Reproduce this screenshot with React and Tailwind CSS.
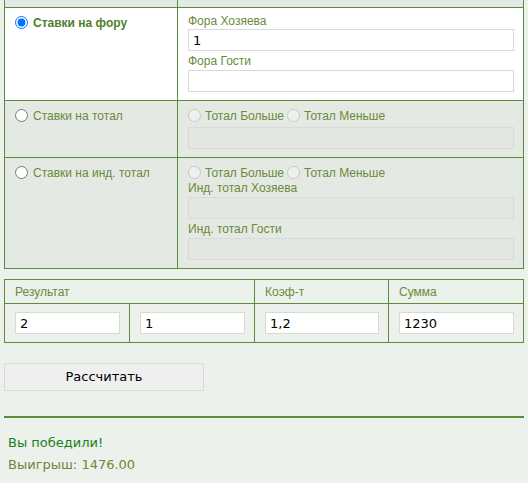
import React from "react";

const font = { fontFamily: '"DejaVu Sans", Verdana, sans-serif' };
const labelFont = { fontFamily: '"Liberation Sans", Tahoma, Arial, sans-serif' };

function Field({ value = "", disabled = false }) {
  return (
    <input
      type="text"
      defaultValue={value}
      disabled={disabled}
      className={
        "block w-full h-[22px] border border-[#d9d9d9] px-[4px] text-[13px] text-black outline-none " +
        (disabled ? "bg-[#e3e7e2]" : "bg-white")
      }
      style={font}
    />
  );
}

function Radio({ checked = false, disabled = false, name }) {
  return (
    <input
      type="radio"
      name={name}
      defaultChecked={checked}
      disabled={disabled}
      className="m-0 w-[13px] h-[13px] shrink-0"
    />
  );
}

function Label({ children, className = "" }) {
  return (
    <div className={"text-[12px] leading-[16px] text-[#6b8a3a] " + className} style={labelFont}>
      {children}
    </div>
  );
}

function BetCell({ title, checked, bold }) {
  return (
    <div className="border-r border-[#5b8c3b] pl-[10px] pt-[5px]">
      <label className="flex items-center gap-[5px]" style={labelFont}>
        <Radio name="bet" checked={checked} />
        <span
          className={
            "pt-[2px] text-[12px] leading-[16px] " +
            (bold ? "font-bold text-[#4f7f2d]" : "text-[#6b8a3a]")
          }
        >
          {title}
        </span>
      </label>
    </div>
  );
}

function TotalRadios({ name }) {
  return (
    <div className="flex items-center h-[16px] text-[12px] text-[#6b8a3a]" style={labelFont}>
      <Radio name={name} disabled />
      <span className="ml-[4px] pt-[1px]">Тотал Больше</span>
      <span className="ml-[3px] flex"><Radio name={name} disabled /></span>
      <span className="ml-[4px] pt-[1px]">Тотал Меньше</span>
    </div>
  );
}

export default function App() {
  return (
    <div className="min-h-[483px] bg-[#edf1ec] pl-[4px] pr-[4px]" style={font}>
      {/* bet types */}
      <div className="w-[520px] border-x border-b border-[#5b8c3b] bg-[#e5e9e4]">
        <div className="grid grid-cols-[173px_1fr] h-[8px] border-b border-[#5b8c3b]">
          <div className="border-r border-[#5b8c3b]" />
          <div />
        </div>

        <div className="grid grid-cols-[173px_1fr] h-[93px] border-b border-[#5b8c3b] bg-white">
          <BetCell title="Ставки на фору" checked bold />
          <div className="pl-[10px] pr-[9px] pt-[5px]">
            <Label>Фора Хозяева</Label>
            <Field value="1" />
            <Label className="mt-[2px] mb-[1px]">Фора Гости</Label>
            <Field />
          </div>
        </div>

        <div className="grid grid-cols-[173px_1fr] h-[57px] border-b border-[#5b8c3b]">
          <BetCell title="Ставки на тотал" />
          <div className="pl-[10px] pr-[9px] pt-[6px]">
            <TotalRadios name="total" />
            <div className="mt-[4px]">
              <Field disabled />
            </div>
          </div>
        </div>

        <div className="grid grid-cols-[173px_1fr] h-[110px]">
          <BetCell title="Ставки на инд. тотал" />
          <div className="pl-[10px] pr-[9px] pt-[6px]">
            <TotalRadios name="ind" />
            <Label className="mb-[1px]">Инд. тотал Хозяева</Label>
            <Field disabled />
            <Label className="mt-[2px] mb-[1px]">Инд. тотал Гости</Label>
            <Field disabled />
          </div>
        </div>
      </div>

      {/* result, odds and stake */}
      <div className="mt-[10px] w-[520px] border border-[#5b8c3b]">
        <div
          className="grid grid-cols-[250px_134px_1fr] h-[24px] border-b border-[#5b8c3b] text-[12px] text-[#6b8a3a]"
          style={labelFont}
        >
          <div className="border-r border-[#5b8c3b] pl-[10px] flex items-center">Результат</div>
          <div className="border-r border-[#5b8c3b] pl-[10px] flex items-center">Коэф-т</div>
          <div className="pl-[10px] flex items-center">Сумма</div>
        </div>
        <div className="grid grid-cols-[125px_125px_134px_1fr] h-[38px]">
          <div className="border-r border-[#5b8c3b] pl-[10px] pr-[9px] pt-[8px]"><Field value="2" /></div>
          <div className="border-r border-[#5b8c3b] pl-[10px] pr-[9px] pt-[8px]"><Field value="1" /></div>
          <div className="border-r border-[#5b8c3b] pl-[10px] pr-[9px] pt-[8px]"><Field value="1,2" /></div>
          <div className="pl-[10px] pr-[9px] pt-[8px]"><Field value="1230" /></div>
        </div>
      </div>

      <button
        type="button"
        className="mt-[20px] block w-[200px] h-[28px] bg-[#efefef] border border-[#d9d9d9] text-[13px] text-black"
        style={font}
      >
        Рассчитать
      </button>

      <div className="mt-[25px] h-[2px] w-[520px] bg-[#5b8c3b]" />

      <div className="pl-[4px] pt-[14px] text-[13px] leading-[22px]">
        <div className="text-[#17801a]">Вы победили!</div>
        <div className="text-[#72853a]">Выигрыш: 1476.00</div>
      </div>
    </div>
  );
}
